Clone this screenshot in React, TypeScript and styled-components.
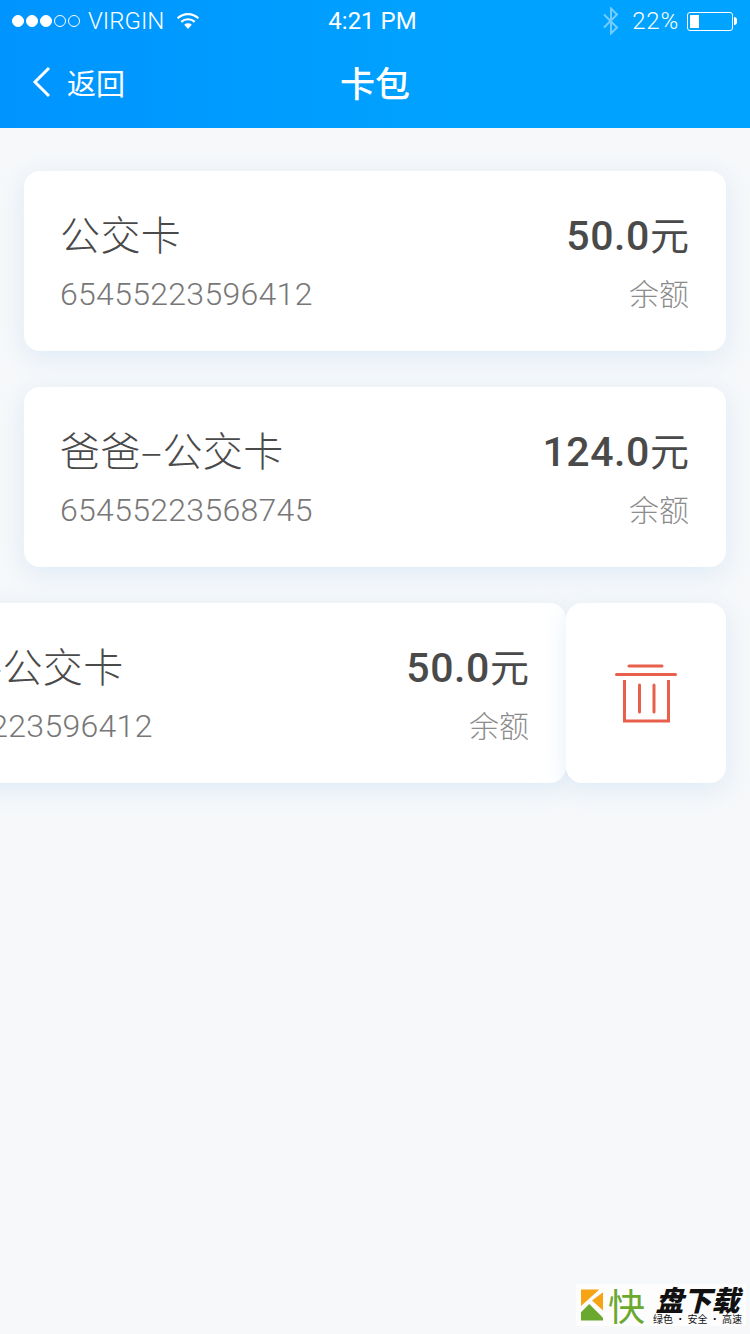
import React, { FC } from 'react';
import styled, { createGlobalStyle } from 'styled-components';

const GlobalStyle = createGlobalStyle`
  html, body {
    margin: 0;
    padding: 0;
    background: #f6f8fa;
    overflow-x: hidden;
  }
  * {
    box-sizing: border-box;
  }
`;

const cjk = '"Noto Sans CJK SC", "Liberation Sans", sans-serif';
const latin = 'Roboto, "Liberation Sans", "Noto Sans CJK SC", sans-serif';

const Page = styled.div`
  position: relative;
  width: 750px;
  height: 1334px;
  overflow: hidden;
  background: #f6f8fa;
`;

const Header = styled.header`
  height: 128px;
  background: linear-gradient(90deg, #0094ff 0%, #00a2ff 60%, #00a3ff 100%);
  color: #fff;
`;

const StatusBar = styled.div`
  display: grid;
  grid-template-columns: 1fr auto 1fr;
  align-items: center;
  height: 42px;
  padding: 0 12px;
  font-family: ${latin};
  font-size: 24px;
  font-weight: 300;
`;

const StatusGroup = styled.div<{ $end?: boolean }>`
  display: flex;
  align-items: center;
  justify-content: ${(p) => (p.$end ? 'flex-end' : 'flex-start')};
`;

const StatusTime = styled.div`
  margin-right: 5px;
  font-weight: 400;
`;

const Percent = styled.span`
  letter-spacing: 0.8px;
`;

const Signal = styled.div`
  display: flex;
  gap: 2px;
  margin-right: 8px;
`;

const SignalDot = styled.span<{ $on: boolean }>`
  width: 12px;
  height: 12px;
  border-radius: 50%;
  border: 1px solid #fff;
  background: ${(p) => (p.$on ? '#fff' : 'transparent')};
`;

const Battery = styled.div`
  position: relative;
  width: 46px;
  height: 19px;
  margin: 0 5px 0 8px;
  padding: 2px;
  border: 1px solid #fff;
  border-radius: 3px;
  &::before {
    content: '';
    display: block;
    width: 9px;
    height: 13px;
    background: #fff;
  }
  &::after {
    content: '';
    position: absolute;
    right: -5px;
    top: 4px;
    width: 3px;
    height: 8px;
    border-radius: 0 3px 3px 0;
    background: #fff;
  }
`;

const NavBar = styled.nav`
  display: grid;
  grid-template-columns: 1fr auto 1fr;
  align-items: center;
  height: 86px;
  padding: 0 32px 6px;
`;

const BackLink = styled.div`
  display: flex;
  align-items: center;
  gap: 15px;
  font-family: ${cjk};
  font-size: 29px;
`;

const NavTitle = styled.h1`
  margin: 0 0 2px;
  font-family: ${cjk};
  font-size: 35px;
  font-weight: 500;
`;

const CardList = styled.main`
  display: flex;
  flex-direction: column;
  gap: 36px;
  padding: 43px 24px 0;
`;

const Card = styled.section`
  flex: none;
  display: flex;
  justify-content: space-between;
  width: 702px;
  height: 180px;
  padding: 39px 37px 0 36px;
  border-radius: 16px;
  background: #fff;
  box-shadow: 0 6px 24px rgba(170, 205, 240, 0.32);
`;

const SwipeRow = styled.div`
  display: flex;
  margin-left: -160px;
`;

const DeleteAction = styled.button`
  flex: none;
  display: flex;
  align-items: center;
  justify-content: center;
  width: 160px;
  height: 180px;
  padding: 0;
  border: none;
  border-radius: 16px;
  background: #fff;
  box-shadow: 0 6px 24px rgba(170, 205, 240, 0.32);
`;

const Column = styled.div<{ $end?: boolean }>`
  display: flex;
  flex-direction: column;
  align-items: ${(p) => (p.$end ? 'flex-end' : 'flex-start')};
`;

const CardName = styled.div`
  height: 46px;
  line-height: 46px;
  font-family: ${cjk};
  font-size: 40px;
  font-weight: 300;
  letter-spacing: 0.4px;
  color: #4a4a4a;
  white-space: nowrap;
`;

const CardNumber = styled.div`
  margin-top: 22px;
  line-height: 32px;
  font-family: ${latin};
  font-size: 32px;
  font-weight: 300;
  letter-spacing: 0.3px;
  color: #777;
`;

const Amount = styled.div`
  height: 46px;
  line-height: 46px;
  font-family: ${latin};
  font-size: 41px;
  font-weight: 500;
  letter-spacing: 0.6px;
  color: #4a4a4a;
  white-space: nowrap;
  span {
    font-family: ${cjk};
    font-size: 39px;
    font-weight: 400;
    letter-spacing: 0;
  }
`;

const BalanceLabel = styled.div`
  margin-top: 20px;
  line-height: 32px;
  font-family: ${cjk};
  font-size: 30px;
  font-weight: 300;
  color: #8c8c8c;
`;

const Watermark = styled.div`
  position: absolute;
  right: 4px;
  bottom: 8px;
  display: flex;
  align-items: center;
  gap: 5px;
  width: 170px;
  height: 42px;
  padding: 0 4px 0 5px;
  background: rgba(255, 255, 255, 0.75);
`;

const WatermarkKuai = styled.span`
  font-family: ${cjk};
  font-size: 37px;
  font-weight: 400;
  line-height: 38px;
  color: #6aa82e;
`;

const WatermarkText = styled.div`
  display: flex;
  flex-direction: column;
  align-items: center;
  margin-left: 3px;
  color: #111;
  font-family: ${cjk};
`;

const WatermarkName = styled.span`
  font-size: 28px;
  font-weight: 900;
  font-style: italic;
  line-height: 28px;
  white-space: nowrap;
`;

const WatermarkSlogan = styled.span`
  font-size: 10px;
  line-height: 12px;
  white-space: nowrap;
`;

const WifiIcon: FC = () => (
  <svg width="24" height="18" viewBox="0 0 26 20" style={{ marginLeft: 12 }}>
    <path d="M1.5 7a16.5 16.5 0 0 1 23 0" fill="none" stroke="#fff" strokeWidth="2.4" />
    <path d="M5.5 11a11 11 0 0 1 15 0" fill="none" stroke="#fff" strokeWidth="2.4" />
    <path d="M8.8 14.2a6.2 6.2 0 0 1 8.4 0L13 19z" fill="#fff" />
  </svg>
);

const BluetoothIcon: FC = () => (
  <svg width="18" height="28" viewBox="0 0 18 28" style={{ marginRight: 12 }}>
    <path
      d="M2 7.5l13 13L9 26.5V1.5l6 6-13 13"
      fill="none"
      stroke="#fff"
      strokeOpacity="0.45"
      strokeWidth="2"
    />
  </svg>
);

const ChevronIcon: FC = () => (
  <svg width="20" height="32" viewBox="0 0 20 32">
    <path d="M17 2L3 16l14 14" fill="none" stroke="#fff" strokeWidth="3" />
  </svg>
);

const TrashIcon: FC = () => (
  <svg width="62" height="60" viewBox="0 0 62 60">
    <g fill="none" stroke="#e8604c" strokeWidth="3" strokeLinecap="round">
      <path d="M14 3h33" />
      <path d="M1.5 11.5h59" />
    </g>
    <g fill="none" stroke="#e8604c" strokeWidth="3">
      <path d="M9.5 17v41h44V17" />
      <path d="M24.5 22v27M39 22v27" strokeLinecap="round" />
    </g>
  </svg>
);

const LogoMark: FC = () => (
  <svg width="24" height="34" viewBox="0 0 24 34">
    <path d="M0 0h20L0 18z" fill="#f7a414" />
    <path d="M24 3v20L12 12z" fill="#f7a414" />
    <path d="M0 25l9-9 15 15v3H0z" fill="#6aa82e" />
  </svg>
);

interface CardBodyProps {
  name: string;
  number: string;
  amount: string;
}

const CardBody: FC<CardBodyProps> = ({ name, number, amount }) => (
  <>
    <Column>
      <CardName>{name}</CardName>
      <CardNumber>{number}</CardNumber>
    </Column>
    <Column $end>
      <Amount>
        {amount}
        <span>元</span>
      </Amount>
      <BalanceLabel>余额</BalanceLabel>
    </Column>
  </>
);

const App: FC = () => {
  return (
    <Page>
      <GlobalStyle />
      <Header>
        <StatusBar>
          <StatusGroup>
            <Signal>
              {[true, true, true, false, false].map((on, index) => (
                <SignalDot key={index} $on={on} />
              ))}
            </Signal>
            VIRGIN
            <WifiIcon />
          </StatusGroup>
          <StatusTime>4:21 PM</StatusTime>
          <StatusGroup $end>
            <BluetoothIcon />
            <Percent>22%</Percent>
            <Battery />
          </StatusGroup>
        </StatusBar>
        <NavBar>
          <BackLink>
            <ChevronIcon />
            返回
          </BackLink>
          <NavTitle>卡包</NavTitle>
          <div />
        </NavBar>
      </Header>

      <CardList>
        <Card>
          <CardBody name="公交卡" number="65455223596412" amount="50.0" />
        </Card>
        <Card>
          <CardBody name="爸爸–公交卡" number="65455223568745" amount="124.0" />
        </Card>
        <SwipeRow>
          <Card>
            <CardBody name="爸爸–公交卡" number="65455223596412" amount="50.0" />
          </Card>
          <DeleteAction aria-label="删除">
            <TrashIcon />
          </DeleteAction>
        </SwipeRow>
      </CardList>

      <Watermark>
        <LogoMark />
        <WatermarkKuai>快</WatermarkKuai>
        <WatermarkText>
          <WatermarkName>盘下载</WatermarkName>
          <WatermarkSlogan>绿色 · 安全 · 高速</WatermarkSlogan>
        </WatermarkText>
      </Watermark>
    </Page>
  );
};

export default App;
